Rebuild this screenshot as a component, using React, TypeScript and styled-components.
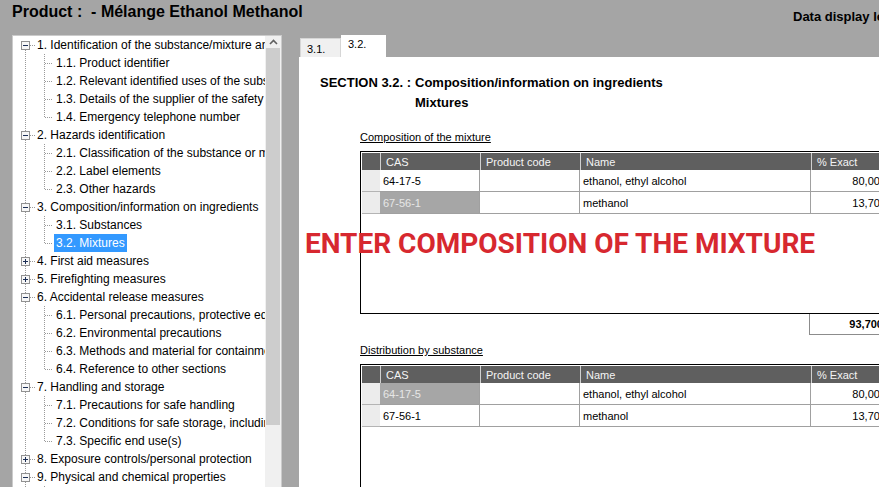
import { useState } from "react";
import styled, { createGlobalStyle } from "styled-components";

const GlobalStyle = createGlobalStyle`
  html, body {
    margin: 0;
    padding: 0;
  }
  body {
    background: #a5a5a5;
    font-family: "Liberation Sans", Arial, sans-serif;
  }
`;

const Screen = styled.div`
  width: 879px;
  height: 487px;
  overflow: hidden;
  background: #a5a5a5;
  color: #000;
`;

const Header = styled.header`
  height: 35px;
  display: grid;
  grid-template-columns: 781px max-content;
  padding-left: 12px;
  white-space: nowrap;
`;

const Title = styled.h1`
  margin: 3px 0 0;
  font-size: 16px;
  line-height: 18px;
  font-weight: bold;
`;

const DisplayLevel = styled.div`
  margin-top: 9px;
  font-size: 13px;
  line-height: 15px;
  font-weight: bold;
`;

const Main = styled.div`
  display: flex;
  align-items: flex-start;
  gap: 17px;
  padding-left: 12px;
`;

const TreePanel = styled.nav`
  flex: none;
  display: flex;
  width: 270px;
  height: 470px;
  box-sizing: border-box;
  border: 1px solid #cbcbcb;
  background: #fff;
`;

const TreeList = styled.ul`
  flex: 1;
  min-width: 0;
  margin: 0;
  padding: 0;
  list-style: none;
  overflow: hidden;
  font-size: 12px;
`;

const TreeRow = styled.li`
  display: flex;
  align-items: center;
  height: 18px;
  white-space: nowrap;
`;

const NodeLabel = styled.span<{ $selected?: boolean }>`
  padding: 0 2px;
  line-height: 18px;
  cursor: default;
  background: ${(p) => (p.$selected ? "#3399ff" : "transparent")};
  color: ${(p) => (p.$selected ? "#fff" : "#000")};
`;

const Scrollbar = styled.div`
  flex: none;
  display: flex;
  flex-direction: column;
  width: 16px;
  background: #f0f0f0;
`;

const ScrollArrow = styled.div`
  height: 12px;
  display: flex;
  align-items: center;
  justify-content: center;
`;

const ScrollThumb = styled.div`
  height: 377px;
  margin: 0 1px;
  background: #cdcdcd;
`;

const RightPane = styled.div`
  flex: none;
  width: 600px;
  display: flex;
  flex-direction: column;
`;

const TabStrip = styled.div`
  display: flex;
  align-items: flex-end;
  height: 22px;
  padding-left: 1px;
`;

const Tab = styled.button<{ $active?: boolean }>`
  box-sizing: border-box;
  margin: 0;
  font: 11px "Liberation Sans", Arial, sans-serif;
  color: #000;
  text-align: left;
  cursor: default;
  width: ${(p) => (p.$active ? 45 : 41)}px;
  height: ${(p) => (p.$active ? 22 : 19)}px;
  padding: ${(p) => (p.$active ? "3px 0 0 7px" : "4px 0 0 6px")};
  line-height: 13px;
  display: flex;
  align-items: flex-start;
  background: ${(p) => (p.$active ? "#fff" : "#f0f0f0")};
  border: ${(p) => (p.$active ? "none" : "1px solid #d6d6d6")};
  border-bottom: none;
`;

const Sheet = styled.section`
  position: relative;
  height: 430px;
  padding: 18px 0 0 21px;
  background: #fff;
`;

const SectionHeading = styled.div`
  display: grid;
  grid-template-columns: max-content max-content;
  column-gap: 4px;
  row-gap: 4px;
  font-size: 13px;
  line-height: 16px;
  font-weight: bold;
`;

const Block = styled.div`
  margin: 20px 0 0 40px;
  width: 533px;
`;

const Caption = styled.div<{ $gap?: number }>`
  margin-top: ${(p) => p.$gap ?? 0}px;
  margin-bottom: 7px;
  font-size: 11px;
  line-height: 13px;
  text-decoration: underline;
`;

const TableBox = styled.div`
  box-sizing: border-box;
  height: 163px;
  border: 1px solid #000;
  padding: 1px;
  font-size: 11px;
`;

const Grid = styled.div`
  display: grid;
  grid-template-columns: 18px 100px 100px 231px 80px;
`;

const HeadCell = styled.div<{ $corner?: boolean }>`
  box-sizing: border-box;
  height: 17px;
  line-height: 18px;
  padding-left: 5px;
  background: #5f5f5f;
  color: #f4f4f4;
  border-left: ${(p) => (p.$corner ? "none" : "1px solid #d0d0d0")};
  white-space: nowrap;
  overflow: hidden;
`;

const RowHead = styled.div`
  box-sizing: border-box;
  height: 22px;
  background: #ececec;
  border-bottom: 1px solid #b4b4b4;
`;

const Cell = styled.div<{ $selected?: boolean; $numeric?: boolean }>`
  box-sizing: border-box;
  height: 22px;
  line-height: 22px;
  padding: ${(p) => (p.$numeric ? "0 4px 0 0" : "0 0 0 3px")};
  text-align: ${(p) => (p.$numeric ? "right" : "left")};
  border-right: 1px solid #a0a0a0;
  border-bottom: 1px solid #a0a0a0;
  background: ${(p) => (p.$selected ? "#a6a6a6" : "#fff")};
  color: ${(p) => (p.$selected ? "#e6e6e6" : "#000")};
  white-space: nowrap;
  overflow: hidden;
`;

const TotalRow = styled.div`
  display: flex;
  justify-content: flex-end;
`;

const TotalBox = styled.div`
  box-sizing: border-box;
  width: 84px;
  height: 21px;
  padding-right: 10px;
  line-height: 20px;
  text-align: right;
  font-size: 11px;
  font-weight: bold;
  border-left: 1px solid #8c8c8c;
  border-bottom: 1px solid #8c8c8c;
`;

const Notice = styled.div`
  position: absolute;
  left: 6px;
  top: 173px;
  font-family: Roboto, "Liberation Sans", sans-serif;
  font-size: 28px;
  line-height: 28px;
  font-weight: bold;
  color: #d7282f;
  white-space: nowrap;
`;

type Node = { label: string; open?: boolean; children?: string[] };

const tree: Node[] = [
  {
    label: "1. Identification of the substance/mixture and of the company/undertaking",
    open: true,
    children: [
      "1.1. Product identifier",
      "1.2. Relevant identified uses of the substance or mixture and uses advised against",
      "1.3. Details of the supplier of the safety data sheet",
      "1.4. Emergency telephone number",
    ],
  },
  {
    label: "2. Hazards identification",
    open: true,
    children: [
      "2.1. Classification of the substance or mixture",
      "2.2. Label elements",
      "2.3. Other hazards",
    ],
  },
  {
    label: "3. Composition/information on ingredients",
    open: true,
    children: ["3.1. Substances", "3.2. Mixtures"],
  },
  { label: "4. First aid measures" },
  { label: "5. Firefighting measures" },
  {
    label: "6. Accidental release measures",
    open: true,
    children: [
      "6.1. Personal precautions, protective equipment and emergency procedures",
      "6.2. Environmental precautions",
      "6.3. Methods and material for containment and cleaning up",
      "6.4. Reference to other sections",
    ],
  },
  {
    label: "7. Handling and storage",
    open: true,
    children: [
      "7.1. Precautions for safe handling",
      "7.2. Conditions for safe storage, including any incompatibilities",
      "7.3. Specific end use(s)",
    ],
  },
  { label: "8. Exposure controls/personal protection" },
  {
    label: "9. Physical and chemical properties",
    open: true,
    children: [
      "9.1. Information on basic physical and chemical properties",
      "9.2. Other information",
    ],
  },
];

const dots = {
  stroke: "#9a9a9a",
  strokeWidth: 1,
  strokeDasharray: "1 1",
  shapeRendering: "crispEdges" as const,
};

function ParentGuides({ first, open }: { first: boolean; open: boolean }) {
  return (
    <svg width={22} height={18} style={{ flex: "none" }}>
      {!first && <line x1={12.5} y1={0} x2={12.5} y2={5} {...dots} />}
      <line x1={12.5} y1={14} x2={12.5} y2={18} {...dots} />
      <line x1={17} y1={9.5} x2={22} y2={9.5} {...dots} />
      <rect x={8.5} y={5.5} width={8} height={8} fill="#f7f7f7" stroke="#919191" shapeRendering="crispEdges" />
      <path d="M10 9.5H15" stroke="#1c2f56" shapeRendering="crispEdges" />
      {!open && <path d="M12.5 7V12" stroke="#1c2f56" shapeRendering="crispEdges" />}
    </svg>
  );
}

function ChildGuides({ last }: { last: boolean }) {
  return (
    <svg width={41} height={18} style={{ flex: "none" }}>
      <line x1={12.5} y1={0} x2={12.5} y2={18} {...dots} />
      <line x1={31.5} y1={0} x2={31.5} y2={last ? 10 : 18} {...dots} />
      <line x1={32} y1={9.5} x2={40} y2={9.5} {...dots} />
    </svg>
  );
}

type Row = { cas: string; name: string; exact: string };

const composition: Row[] = [
  { cas: "64-17-5", name: "ethanol, ethyl alcohol", exact: "80,000" },
  { cas: "67-56-1", name: "methanol", exact: "13,700" },
];

function DataTable({ rows, selected }: { rows: Row[]; selected: number }) {
  return (
    <TableBox>
      <Grid>
        <HeadCell $corner />
        <HeadCell>CAS</HeadCell>
        <HeadCell>Product code</HeadCell>
        <HeadCell>Name</HeadCell>
        <HeadCell>% Exact</HeadCell>
        {rows.map((r, i) => (
          <>
            <RowHead key={`h${i}`} />
            <Cell key={`c${i}`} $selected={i === selected}>{r.cas}</Cell>
            <Cell key={`p${i}`} />
            <Cell key={`n${i}`}>{r.name}</Cell>
            <Cell key={`e${i}`} $numeric>{r.exact}</Cell>
          </>
        ))}
      </Grid>
    </TableBox>
  );
}

export default function App() {
  const [selected, setSelected] = useState("3.2. Mixtures");
  const [tab, setTab] = useState("3.2.");

  return (
    <Screen>
      <GlobalStyle />
      <Header>
        <Title>Product :&nbsp; - Mélange Ethanol Methanol</Title>
        <DisplayLevel>Data display level</DisplayLevel>
      </Header>
      <Main>
        <TreePanel>
          <TreeList>
            {tree.map((node, i) => (
              <>
                <TreeRow key={node.label}>
                  <ParentGuides first={i === 0} open={!!node.open} />
                  <NodeLabel
                    $selected={selected === node.label}
                    onClick={() => setSelected(node.label)}
                  >
                    {node.label}
                  </NodeLabel>
                </TreeRow>
                {node.open &&
                  node.children?.map((child, j) => (
                    <TreeRow key={child}>
                      <ChildGuides last={j === node.children!.length - 1} />
                      <NodeLabel
                        $selected={selected === child}
                        onClick={() => setSelected(child)}
                      >
                        {child}
                      </NodeLabel>
                    </TreeRow>
                  ))}
              </>
            ))}
          </TreeList>
          <Scrollbar>
            <ScrollArrow>
              <svg width={9} height={6} viewBox="0 0 9 6">
                <path d="M1 5L4.5 1.5L8 5" fill="none" stroke="#606060" strokeWidth={1.6} />
              </svg>
            </ScrollArrow>
            <ScrollThumb />
          </Scrollbar>
        </TreePanel>

        <RightPane>
          <TabStrip>
            {["3.1.", "3.2."].map((t) => (
              <Tab key={t} $active={tab === t} onClick={() => setTab(t)}>
                {t}
              </Tab>
            ))}
          </TabStrip>
          <Sheet>
            <SectionHeading>
              <span>SECTION 3.2. :</span>
              <span>Composition/information on ingredients</span>
              <span />
              <span>Mixtures</span>
            </SectionHeading>
            <Block>
              <Caption>Composition of the mixture</Caption>
              <DataTable rows={composition} selected={1} />
              <TotalRow>
                <TotalBox>93,700</TotalBox>
              </TotalRow>
              <Caption $gap={9}>Distribution by substance</Caption>
              <DataTable rows={composition} selected={0} />
            </Block>
            <Notice>ENTER COMPOSITION OF THE MIXTURE</Notice>
          </Sheet>
        </RightPane>
      </Main>
    </Screen>
  );
}
